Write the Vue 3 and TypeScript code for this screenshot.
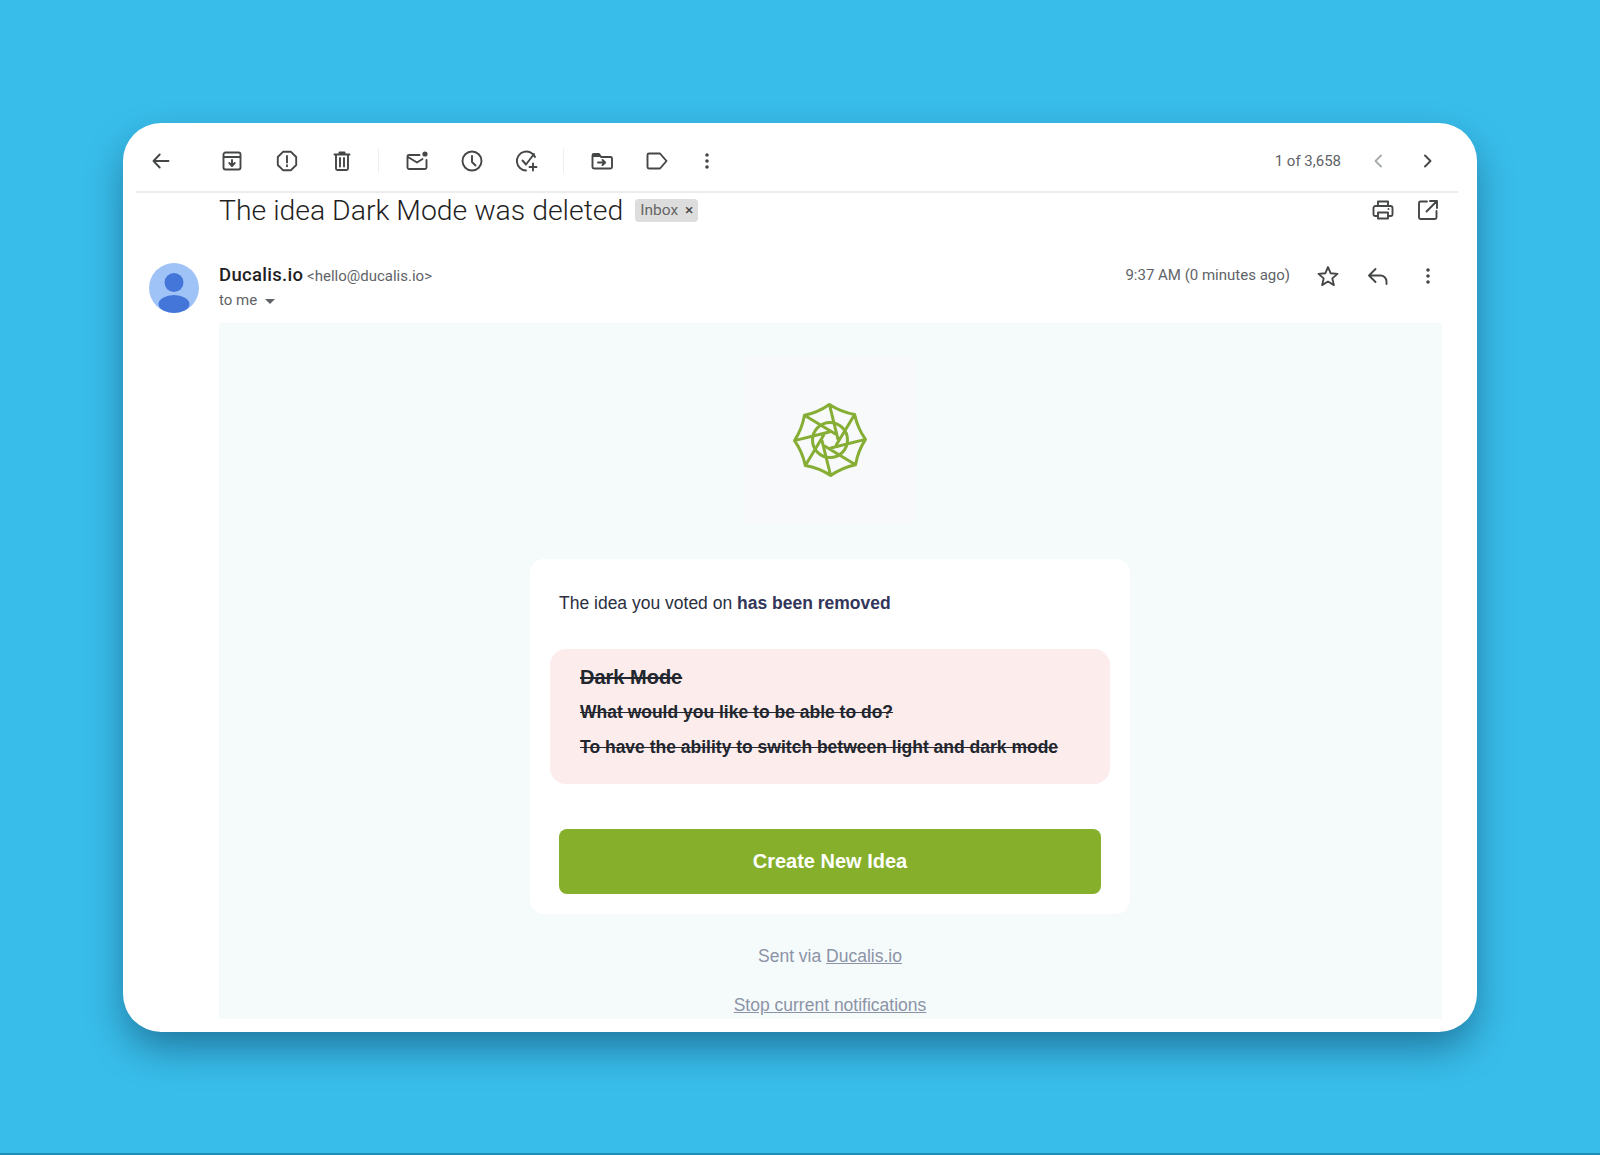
<template>
  <div class="page">
    <main class="window">
      <header class="toolbar">
        <button class="tool back"><svg viewBox="0 0 24 24"><path :d="icons.back" /></svg></button>
        <template v-for="(group, i) in toolGroups" :key="i">
          <span v-if="i > 0" class="sep"></span>
          <button v-for="name in group" :key="name" class="tool">
            <svg viewBox="0 0 24 24">
              <path :d="icons[name]" />
              <circle v-if="name === 'mail'" cx="20" cy="5" r="2.6" class="solid" />
              <path v-if="name === 'move'" d="M3 5.5h6l1.7 2.5H3z" class="solid" />
            </svg>
          </button>
        </template>
        <button class="tool narrow">
          <svg viewBox="0 0 24 24"><path :d="icons.dots" class="dots" /></svg>
        </button>
        <span class="pager">1 of 3,658</span>
        <button class="tool nav muted"><svg viewBox="0 0 24 24"><path :d="icons.prev" /></svg></button>
        <button class="tool nav"><svg viewBox="0 0 24 24"><path :d="icons.next" /></svg></button>
      </header>

      <div class="subject-row">
        <h1 class="subject">The idea Dark Mode was deleted</h1>
        <span class="chip">Inbox <i>×</i></span>
        <button class="tool nav print"><svg viewBox="0 0 24 24"><path :d="icons.print" /></svg></button>
        <button class="tool nav"><svg viewBox="0 0 24 24"><path :d="icons.open" /></svg></button>
      </div>

      <div class="sender-row">
        <svg class="avatar" viewBox="0 0 50 50">
          <circle cx="25" cy="25" r="25" fill="#a0c3f7" />
          <circle cx="25" cy="19.5" r="9.5" fill="#4475d9" />
          <ellipse cx="25" cy="41" rx="15.5" ry="9" fill="#4475d9" />
        </svg>
        <div class="sender">
          <div><b>Ducalis.io</b> <span class="addr">&lt;hello@ducalis.io&gt;</span></div>
          <div class="to">to me <span class="caret"></span></div>
        </div>
        <span class="time">9:37 AM (0 minutes ago)</span>
        <button class="tool nav star"><svg viewBox="0 0 24 24"><path :d="icons.star" /></svg></button>
        <button class="tool nav"><svg viewBox="0 0 24 24"><path :d="icons.reply" /></svg></button>
        <button class="tool nav"><svg viewBox="0 0 24 24"><path :d="icons.dots" class="dots" /></svg></button>
      </div>

      <section class="mail">
        <div class="logo-box">
          <svg class="logo" viewBox="-40 -40 80 80">
            <path :d="webPath" />
            <circle r="17.5" />
          </svg>
        </div>

        <div class="panel">
          <p class="lead">The idea you voted on <b>has been removed</b></p>
          <div class="removed">
            <div class="removed-title">Dark Mode</div>
            <div class="removed-line">What would you like to be able to do?</div>
            <div class="removed-line">To have the ability to switch between light and dark mode</div>
          </div>
          <a class="cta">Create New Idea</a>
        </div>

        <p class="foot first">Sent via <a>Ducalis.io</a></p>
        <p class="foot"><a>Stop current notifications</a></p>
      </section>
    </main>
  </div>
</template>

<script setup lang="ts">
const icons: Record<string, string> = {
  back: 'M19.5 12H4.5M10.7 5.5L4.5 12l6.2 6.5',
  archive: 'M5.5 3.5h13a2 2 0 0 1 2 2v13a2 2 0 0 1-2 2h-13a2 2 0 0 1-2-2v-13a2 2 0 0 1 2-2zM3.5 8h17M12 11v5.5M9.3 14l2.7 3 2.7-3',
  report: 'M8 2.8h8L21.2 8v8L16 21.2H8L2.8 16V8zM12 7v6.5M12 16.3v1',
  trash: 'M4.5 5.5h15M9.5 5V3.5h5V5M6 5.5v14a1.5 1.5 0 0 0 1.5 1.5h9a1.5 1.5 0 0 0 1.5-1.5v-14M10 9v8.5M14 9v8.5',
  mail: 'M14.5 6H4a1.5 1.5 0 0 0-1.5 1.5v11A1.5 1.5 0 0 0 4 20h16a1.5 1.5 0 0 0 1.5-1.5V11M3 8l9 5.5 5.5-3.5',
  clock: 'M12 2.5a9.5 9.5 0 1 0 0 19 9.5 9.5 0 0 0 0-19zM12 7v6l3.5 3.5',
  task: 'M20 8A9.5 9.5 0 1 0 11 21.5M7.5 11.5l3.5 4L19 5M18 14.5v7M14.5 18h7',
  move: 'M2.5 6.5A1.5 1.5 0 0 1 4 5h5l2 3h9.5A1.5 1.5 0 0 1 22 9.5V18a1.5 1.5 0 0 1-1.5 1.5H4A1.5 1.5 0 0 1 2.5 18zM8 13.5h7M12.5 11l2.7 2.5-2.7 2.5',
  label: 'M4 4.5h11l6.5 7.5-6.5 7.5H4A1.5 1.5 0 0 1 2.5 18V6A1.5 1.5 0 0 1 4 4.5z',
  dots: 'M12 6v.01M12 12v.01M12 18v.01',
  prev: 'M15 6.5L9.5 12l5.5 5.5',
  next: 'M9 6.5l5.5 5.5L9 17.5',
  print: 'M7 8V3.5h10V8M7 18H4a1.5 1.5 0 0 1-1.5-1.5V10A2 2 0 0 1 4.5 8h15a2 2 0 0 1 2 2v6.5A1.5 1.5 0 0 1 20 18h-3M7 14.5h10v6H7zM17.5 11h.01',
  open: 'M11 3.5H4.5A1.5 1.5 0 0 0 3 5v14.5A1.5 1.5 0 0 0 4.5 21H19a1.5 1.5 0 0 0 1.5-1.5V13M14 3h7v7M21 3L10.5 13.5',
  star: 'M12 3l2.7 6.3 6.8.6-5.2 4.5 1.6 6.7L12 17.5l-5.9 3.6 1.6-6.7L2.5 9.9l6.8-.6z',
  reply: 'M9.5 5l-6.5 6.5L9.5 18M3 11.5h11.5a6 6 0 0 1 6 6V20',
}

const toolGroups: string[][] = [
  ['archive', 'report', 'trash'],
  ['mail', 'clock', 'task'],
  ['move', 'label'],
]

// spider web mark: eight curved outer edges and eight spokes tangent to a small hole
const point = (r: number, deg: number): string => {
  const a = (deg * Math.PI) / 180
  return `${(r * Math.cos(a)).toFixed(2)} ${(r * Math.sin(a)).toFixed(2)}`
}

const webPath = Array.from({ length: 8 }, (_, k) => {
  const deg = -91 + k * 45
  const edge = `M${point(35.5, deg)}Q${point(30, deg + 22.5)} ${point(35.5, deg + 45)}`
  const spoke = `M${point(35.5, deg)}L${point(8, deg + 85)}`
  return edge + spoke
}).join('')
</script>

<style>
html,
body {
  margin: 0;
  background: #38bdea;
}
</style>

<style scoped>
.page {
  box-sizing: border-box;
  height: 1155px;
  padding: 123px 123px 0;
  background: #38bdea;
  border-bottom: 2px solid #1f8fb5;
}

.window {
  box-sizing: border-box;
  height: 909px;
  padding: 0 24px 13px 13px;
  display: flex;
  flex-direction: column;
  background: #fff;
  border-radius: 38px;
  box-shadow: 0 18px 40px -4px rgba(0, 25, 55, 0.45);
  font-family: Roboto, "Liberation Sans", sans-serif;
  color: #202124;
}

.toolbar {
  box-sizing: border-box;
  flex: none;
  height: 70px;
  margin-right: -5px;
  padding: 8px 5px 0 0;
  display: flex;
  align-items: center;
  border-bottom: 2px solid #ececec;
}

.tool {
  width: 55px;
  height: 40px;
  flex: none;
  padding: 0;
  display: flex;
  align-items: center;
  justify-content: center;
  background: none;
  border: 0;
}

.tool svg {
  width: 24px;
  height: 24px;
  fill: none;
  stroke: #444746;
  stroke-width: 1.9;
  stroke-linejoin: round;
  stroke-linecap: round;
}

.tool .solid {
  fill: #444746;
  stroke: none;
}

.tool .dots {
  stroke-width: 3.6;
}

.back {
  width: 50px;
  margin-right: 18px;
}

.narrow {
  width: 45px;
}

.sep {
  width: 1px;
  height: 24px;
  flex: none;
  margin: 0 10px 0 9px;
  background: #eeeeee;
}

.pager {
  margin-left: auto;
  margin-right: 12px;
  font-size: 15px;
  color: #5f6368;
}

.nav {
  width: 50px;
}

.muted svg {
  stroke: #a8abad;
}

.subject-row {
  box-sizing: border-box;
  flex: none;
  height: 36px;
  padding: 0 0 2px 83px;
  display: flex;
  align-items: center;
}

.subject {
  margin: 0;
  font-size: 28.4px;
  font-weight: 300;
  color: #1f1f1f;
}

.chip {
  margin-left: 12px;
  padding: 0 5px;
  height: 23px;
  line-height: 23px;
  font-size: 15.5px;
  color: #666;
  background: #dddddd;
  border-radius: 4px;
}

.chip i {
  font-style: normal;
  margin-left: 3px;
  color: #444;
}

.print {
  width: 40px;
  margin-left: auto;
}

.sender-row {
  flex: none;
  height: 94px;
  padding: 34px 0 0 13px;
  box-sizing: border-box;
  display: flex;
  align-items: flex-start;
}

.avatar {
  width: 50px;
  height: 50px;
  flex: none;
}

.sender {
  margin: 1px 0 0 20px;
  font-size: 15px;
  color: #5f6368;
}

.sender b {
  font-size: 18.5px;
  font-weight: 500;
  letter-spacing: 0.3px;
  color: #1f1f1f;
}

.to {
  margin-top: 5px;
  display: flex;
  align-items: center;
  gap: 8px;
}

.caret {
  width: 0;
  height: 0;
  margin-top: 2px;
  border: 5px solid transparent;
  border-top: 5px solid #5f6368;
  border-bottom: 0;
}

.time {
  margin-left: auto;
  margin-right: 13px;
  padding-top: 2px;
  font-size: 15px;
  line-height: 20px;
  color: #5f6368;
}

.sender-row .tool {
  margin-top: -7px;
}

.mail {
  flex: 1;
  min-height: 0;
  margin: 0 11px 0 83px;
  padding: 32px 1px 0 0;
  overflow: hidden;
  background: #f5fafb;
  font-family: "Liberation Sans", Arial, sans-serif;
  text-align: center;
}

.logo-box {
  width: 170px;
  height: 170px;
  margin: 0 auto 34px;
  display: flex;
  align-items: center;
  justify-content: center;
  background: #f7f9fa;
}

.logo {
  width: 80px;
  height: 80px;
  fill: none;
  stroke: #86ae34;
  stroke-width: 3;
  stroke-linecap: round;
}

.panel {
  box-sizing: border-box;
  width: 600px;
  height: 355px;
  margin: 0 auto;
  padding: 33px 20px 0;
  text-align: left;
  background: #fff;
  border-radius: 14px;
}

.lead {
  margin: 0 0 35px 9px;
  font-size: 17.5px;
  line-height: 22px;
  color: #2b2f40;
}

.lead b {
  color: #33365a;
}

.removed {
  box-sizing: border-box;
  height: 135px;
  padding: 15px 30px 0;
  background: #fcecec;
  border-radius: 16px;
  font-weight: 700;
  color: #22262e;
  text-decoration: line-through;
}

.removed-title {
  margin-bottom: -1px;
  font-size: 20px;
  line-height: 26px;
}

.removed-line {
  margin-top: 12px;
  font-size: 17.5px;
  line-height: 23px;
}

.cta {
  margin: 45px 9px 0;
  height: 65px;
  display: flex;
  align-items: center;
  justify-content: center;
  background: #86b02c;
  border-radius: 8px;
  font-size: 20px;
  font-weight: 700;
  color: #fff;
}

.foot {
  margin: 0;
  font-size: 17.5px;
  line-height: 22px;
  color: #8c93a6;
}

.foot a {
  text-decoration: underline;
}

.first {
  margin-top: 31px;
  margin-bottom: 27px;
}
</style>
